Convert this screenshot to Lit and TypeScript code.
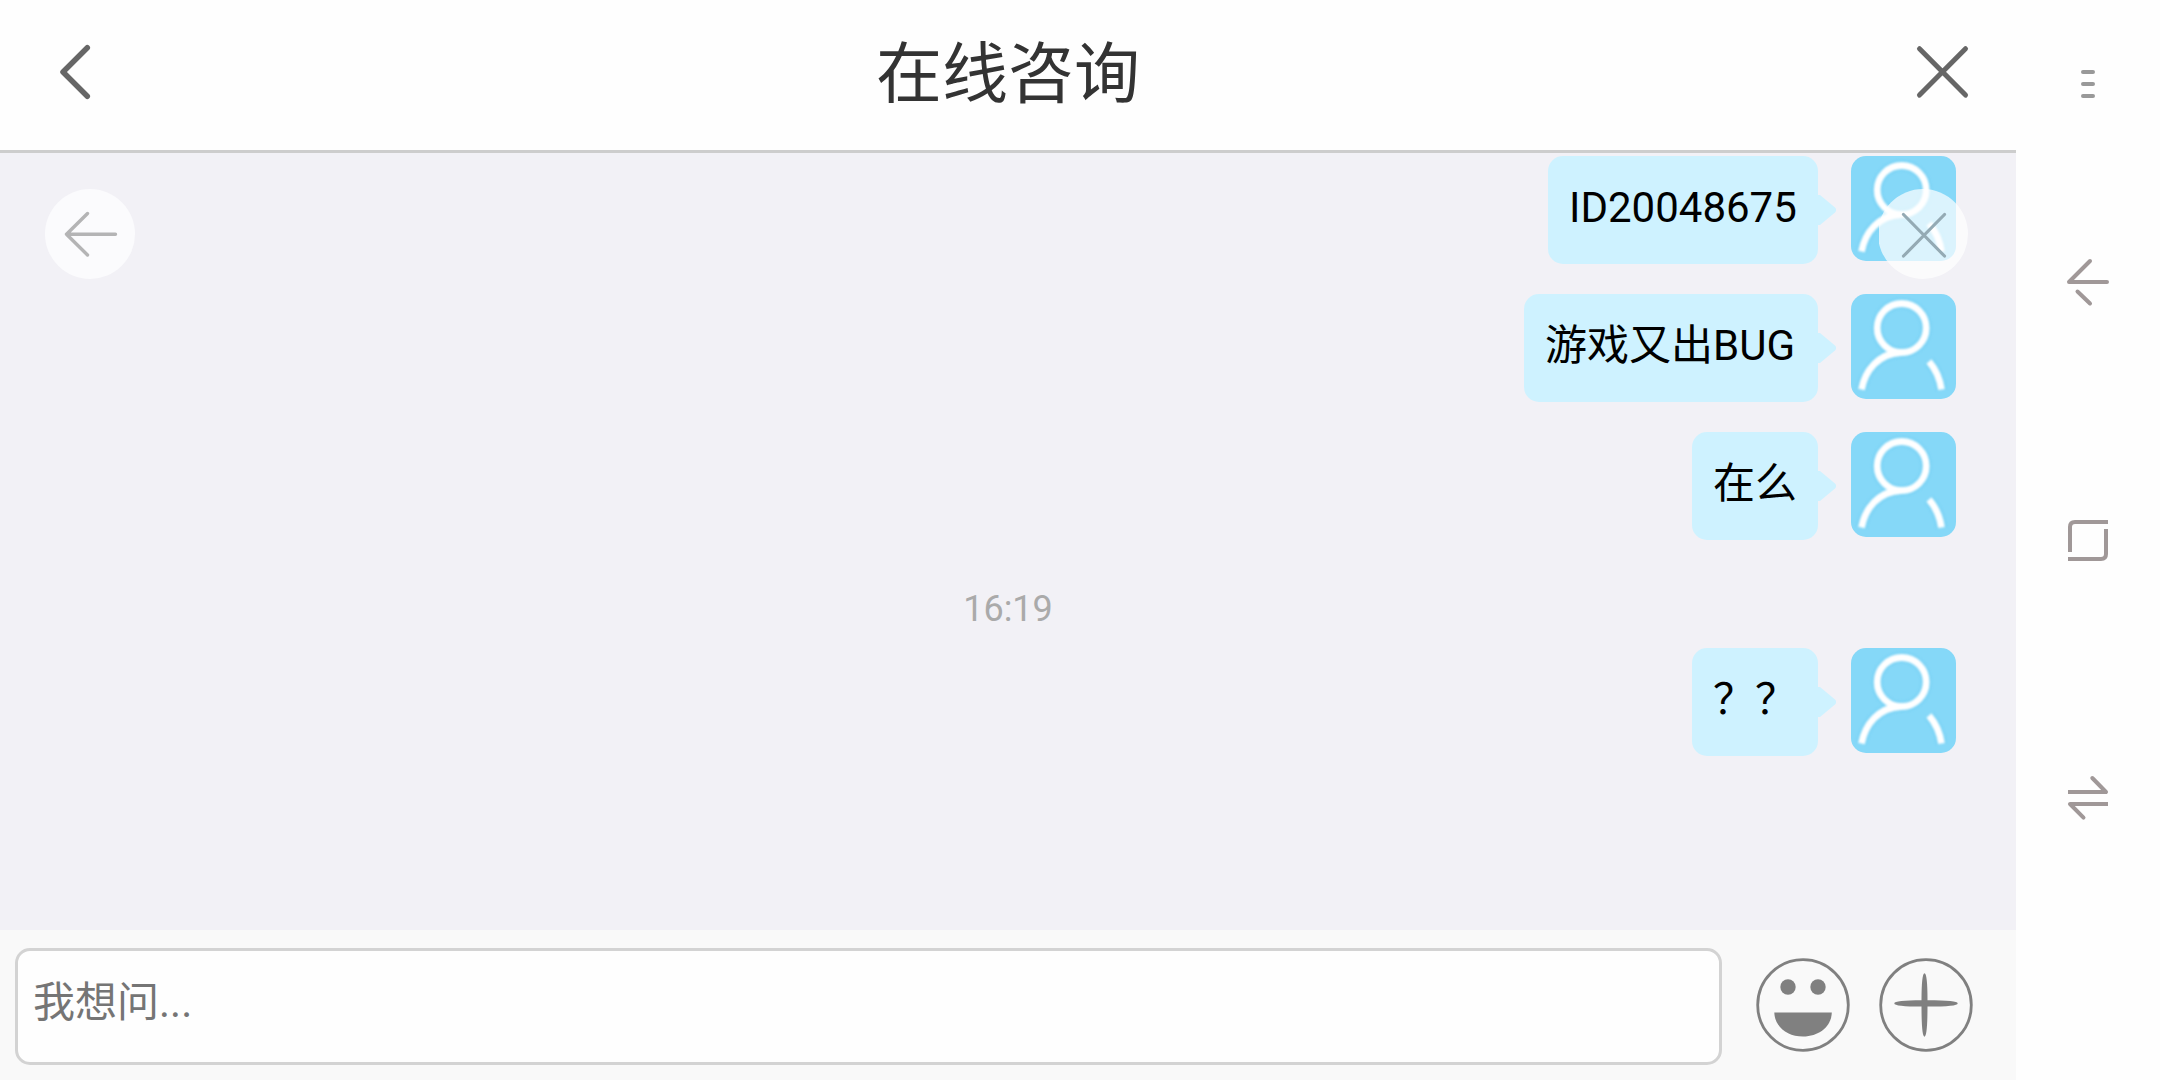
import { LitElement, html, css, svg } from "lit";
import { customElement, property } from "lit/decorators.js";
import { styleMap } from "lit/directives/style-map.js";

interface Entry {
  kind: "message" | "time";
  text: string;
  width?: number;
}

const entries: Entry[] = [
  { kind: "message", text: "ID20048675", width: 270 },
  { kind: "message", text: "游戏又出BUG", width: 294 },
  { kind: "message", text: "在么", width: 126 },
  { kind: "time", text: "16:19" },
  { kind: "message", text: "？？", width: 126 },
];

const avatarStrokes = svg`
  <circle cx="50.700" cy="34" r="24.500"></circle>
  <path d="M10.500 95.500C14 77 27 59.500 50 58.500M78 67.500Q88 79 90.500 95.500"></path>
`;

@customElement("chat-bubble")
export class ChatBubble extends LitElement {
  @property() text = "";
  @property({ type: Number }) width = 126;

  static styles = css`
    :host {
      display: flex;
      justify-content: flex-end;
      align-items: flex-start;
      height: 108px;
      margin-bottom: 30px;
    }
    .bubble {
      height: 108px;
      box-sizing: border-box;
      padding: 22px 0 20px 21px;
      border-radius: 15px;
      background: #cef2ff;
      color: #000;
      font-size: 42px;
      line-height: 60px;
      white-space: nowrap;
    }
    .tail {
      width: 18px;
      height: 30px;
      margin-top: 39px;
      margin-right: 15px;
    }
    .avatar {
      width: 105px;
      height: 105px;
      border-radius: 15px;
      background: #85d8f8;
    }
    .soft {
      filter: blur(1.1px);
    }
    svg {
      display: block;
    }
  `;

  render() {
    return html`
      <div class="bubble" style=${styleMap({ width: `${this.width}px` })}>${this.text}</div>
      <svg class="tail" viewBox="0 0 18 30">
        <path d="M0 0H2L17 12.500Q19.500 15 17 17.500L2 30H0Z" fill="#cef2ff"></path>
      </svg>
      <svg class="avatar" viewBox="0 0 105 105" fill="none" stroke-linecap="butt">
        <g class="soft">
          <g stroke="#6fcdf4" stroke-width="11" opacity=".5">${avatarStrokes}</g>
          <g stroke="#fff" stroke-width="6.800">${avatarStrokes}</g>
        </g>
      </svg>
    `;
  }
}

@customElement("app-root")
export class AppRoot extends LitElement {
  static styles = css`
    :host {
      display: block;
      width: 2160px;
      height: 1080px;
      overflow: hidden;
      background: #fefefe;
      font-family: Roboto, "Noto Sans CJK SC", sans-serif;
    }
    svg {
      display: block;
    }
    .screen {
      display: flex;
      height: 1080px;
    }
    .page {
      position: relative;
      display: flex;
      flex-direction: column;
      width: 2016px;
      height: 1080px;
    }
    .header {
      display: flex;
      align-items: center;
      justify-content: space-between;
      box-sizing: border-box;
      height: 153px;
      padding: 0 45px 6px 57px;
      border-bottom: 3px solid #cdcdcd;
      background: #fefefe;
    }
    .title {
      margin: 0;
      padding: 6px 0 0 12px;
      color: #333;
      font-size: 66px;
      font-weight: 400;
      line-height: 96px;
    }
    .log {
      flex: 1;
      min-height: 0;
      overflow: hidden;
      padding: 3px 60px 0 0;
      background: #f2f1f6;
    }
    .time {
      height: 78px;
      padding-left: 60px;
      color: #aaa;
      font-size: 36px;
      line-height: 78px;
      text-align: center;
    }
    .composer {
      display: flex;
      align-items: flex-start;
      box-sizing: border-box;
      height: 150px;
      padding: 18px 42px 0 15px;
      background: #f9f9f9;
    }
    .field {
      flex: 1;
      box-sizing: border-box;
      height: 117px;
      padding: 21px 15px 0;
      border: 3px solid #d3d3d3;
      border-radius: 15px;
      background: #fefefe;
      color: #757575;
      font-size: 42px;
      line-height: 62px;
    }
    .tool {
      margin-top: 9px;
    }
    .smile {
      margin-left: 33px;
      margin-right: 27px;
    }
    .float {
      position: absolute;
      top: 189px;
    }
    .float-back {
      left: 45px;
    }
    .float-close {
      left: 1879px;
    }
    .rail {
      display: flex;
      flex-direction: column;
      align-items: center;
      width: 144px;
      height: 1080px;
      box-sizing: border-box;
      padding-top: 54px;
      background: #fefefe;
    }
    .nav-back {
      margin-top: 138px;
    }
    .nav-home {
      margin-top: 198px;
    }
    .nav-switch {
      margin-top: 198px;
    }
  `;

  render() {
    return html`
      <div class="screen">
        <div class="page">
          <div class="header">
            <svg width="36" height="60" viewBox="0 0 36 60" fill="none" stroke="#666" stroke-width="5.500" stroke-linecap="round" stroke-linejoin="round">
              <path d="M30.300 5.700L6 30L30.300 54.300"></path>
            </svg>
            <h1 class="title">在线咨询</h1>
            <svg width="60" height="60" viewBox="0 0 60 60" fill="none" stroke="#666" stroke-width="5" stroke-linecap="round">
              <path d="M8.500 6.700L54.500 53.100M54.500 6.700L8.500 53.100"></path>
            </svg>
          </div>
          <div class="log">
            ${entries.map((e) =>
              e.kind === "time"
                ? html`<div class="time">${e.text}</div>`
                : html`<chat-bubble .text=${e.text} .width=${e.width}></chat-bubble>`,
            )}
          </div>
          <div class="composer">
            <div class="field">我想问...</div>
            <svg class="tool smile" width="96" height="96" viewBox="0 0 96 96">
              <circle cx="48" cy="48" r="45.300" fill="none" stroke="#808080" stroke-width="2.800"></circle>
              <circle cx="33" cy="30" r="7.700" fill="#808080"></circle>
              <circle cx="63" cy="30" r="7.700" fill="#808080"></circle>
              <path d="M19.300 55.500H76.800C76.500 69 64.500 79.500 48 79.500S19.600 69 19.300 55.500Z" fill="#808080"></path>
            </svg>
            <svg class="tool" width="96" height="96" viewBox="0 0 96 96">
              <circle cx="48" cy="48" r="45.300" fill="none" stroke="#808080" stroke-width="2.800"></circle>
              <path d="M46.500 16.300C48.500 16.300 49.500 26 49.500 43.300C70 43.300 79.700 44.300 79.700 46.400S70 49.500 49.500 49.500C49.500 69 48.500 79.700 46.500 79.700S43.500 69 43.500 49.500C26 49.500 16.300 48.500 16.300 46.400S26 43.300 43.500 43.300C43.500 26 44.500 16.300 46.500 16.300Z" fill="#808080"></path>
            </svg>
          </div>
          <svg class="float float-back" width="90" height="90" viewBox="0 0 90 90" fill="none" stroke-linecap="round" stroke-linejoin="round">
            <circle cx="45" cy="45" r="45" fill="#fbfbfd"></circle>
            <path d="M70.500 45.300H21.500L42.500 24.500M21.500 45.300L42.500 66" stroke="#b4b4b5" stroke-width="3.400"></path>
          </svg>
          <svg class="float float-close" width="90" height="90" viewBox="0 0 90 90" fill="none" stroke-linecap="round">
            <circle cx="44" cy="45" r="45" fill="#fff" fill-opacity=".7"></circle>
            <path d="M24.500 25.500L65.500 67M65.500 25.500L24.500 67" stroke="#94aab4" stroke-width="3.200"></path>
          </svg>
        </div>
        <div class="rail">
          <svg width="48" height="60" viewBox="0 0 48 60" fill="none" stroke="#999" stroke-width="4" stroke-linecap="round">
            <path d="M19 18H29M19 30H29M19 42H29"></path>
          </svg>
          <svg class="nav-back" width="48" height="60" viewBox="0 0 48 60" fill="none" stroke="#a09898" stroke-width="4" stroke-linecap="round" stroke-linejoin="round">
            <path d="M43 30H5L26 9M13.500 39.500L26 51.500"></path>
          </svg>
          <svg class="nav-home" width="48" height="60" viewBox="0 0 48 60" fill="none" stroke="#a09898" stroke-width="4">
            <path d="M44 12H11Q6 12 6 17V42M42 19V44Q42 49 37 49H4"></path>
          </svg>
          <svg class="nav-switch" width="48" height="60" viewBox="0 0 48 60" fill="none" stroke="#a09898" stroke-width="4">
            <path d="M4 24H42M44 36H6"></path>
            <path d="M42 24L28.300 10M6 36L19.500 49.700" stroke-linecap="round"></path>
          </svg>
        </div>
      </div>
    `;
  }
}
